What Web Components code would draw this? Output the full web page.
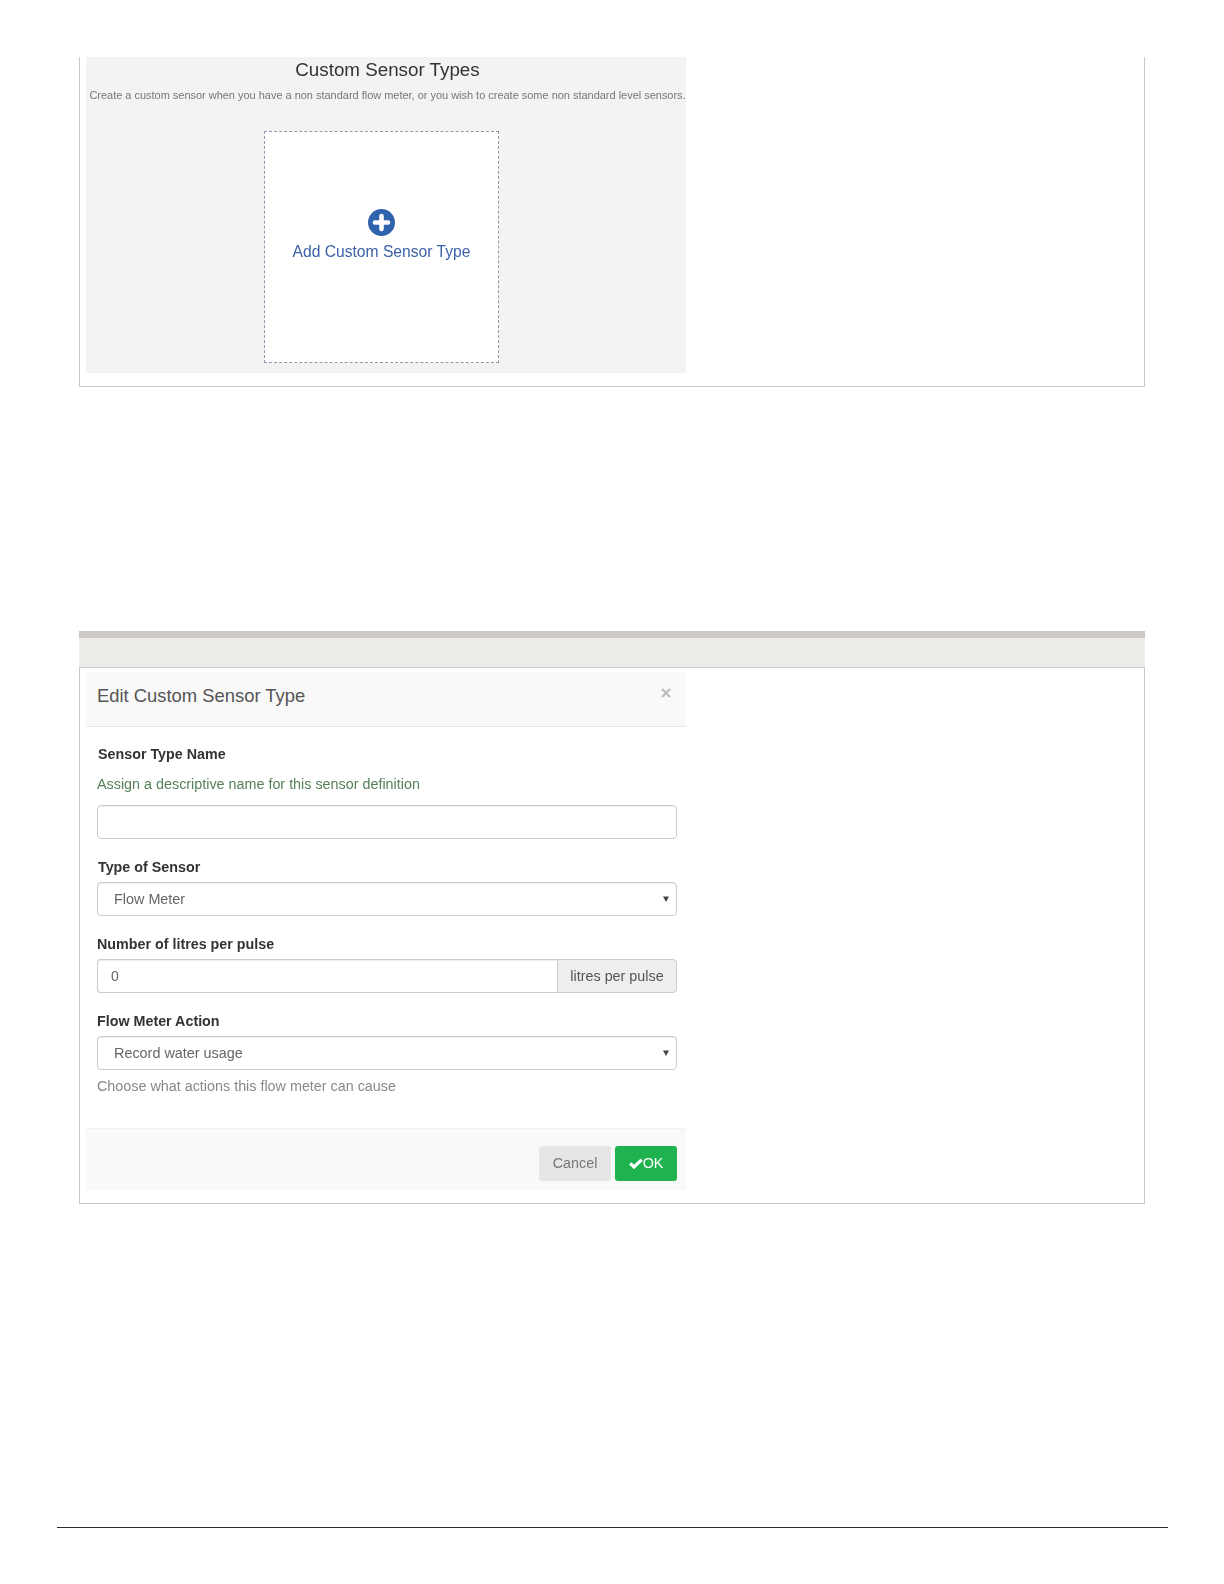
<!DOCTYPE html>
<html>
<head>
<meta charset="utf-8">
<style>
  html, body { margin: 0; background: #fff; }
  body {
    width: 1224px;
    height: 1584px;
    overflow: hidden;
    font-family: "Liberation Sans", Arial, sans-serif;
    color: #333;
  }
</style>
</head>
<body>
<doc-page>
  <shot-frame>
    <custom-types></custom-types>
  </shot-frame>
  <shot-frame heading>
    <edit-dialog></edit-dialog>
  </shot-frame>
</doc-page>

<script>
class DocPage extends HTMLElement {
  constructor() {
    super()
    this.attachShadow({ mode: 'open' }).innerHTML = /*html*/ `
<style>
  :host { display: block; height: 1584px; padding-top: 57px; box-sizing: border-box; position: relative; }
  .shots { display: flex; flex-flow: column; gap: 244px; margin: 0 79px; }
  hr { position: absolute; left: 57px; right: 56px; top: 1527px; margin: 0; border: 0; border-top: 1px solid #2b2b2b; }
</style>
<div class="shots"><slot></slot></div>
<hr>`
  }
}

class ShotFrame extends HTMLElement {
  constructor() {
    super()
    this.attachShadow({ mode: 'open' }).innerHTML = /*html*/ `
<style>
  :host { display: block; box-sizing: border-box; width: 1066px; border: 1px solid #c9c9c9; border-top: 0; }
  .bar { display: none; }
  :host([heading]) .bar {
    display: block;
    height: 29px;
    margin: 0 -1px;
    background: #eeece8;
    border-top: 7px solid #cdcac5;
    border-bottom: 1px solid #c9c9c9;
  }
  .inner { padding: 0 0 13px 6px; }
  :host([heading]) .inner { padding-top: 4px; padding-bottom: 13px; }
</style>
<div class="bar"></div>
<div class="inner"><slot></slot></div>`
  }
}

class CustomTypes extends HTMLElement {
  constructor() {
    super()
    this.attachShadow({ mode: 'open' }).innerHTML = /*html*/ `
<style>
  :host { display: block; box-sizing: border-box; width: 600px; height: 316px; padding-top: 3px; background: #f3f3f3; filter: blur(.35px); }
  h2 { margin: 0 0 0 3px; font-size: 18.800px; line-height: 20px; font-weight: 400; color: #333; text-align: center; }
  p {
    margin: 8px 0 0;
    padding-left: 3px;
    font-size: 11px;
    line-height: 14px;
    color: #777;
    text-align: center;
    white-space: nowrap;
    letter-spacing: -.02px;
  }
  .card {
    box-sizing: border-box;
    width: 235px;
    height: 232px;
    margin: 29px 0 0 178px;
    display: flex;
    flex-flow: column;
    align-items: center;
    padding-top: 77px;
    background: #fff;
    border: 1px dashed #8f99ad;
    color: #3b62a8;
    font-size: 15.650px;
    line-height: 20px;
  }
  svg { display: block; width: 27px; height: 27px; margin-bottom: 6px; }
</style>
<h2>Custom Sensor Types</h2>
<p>Create a custom sensor when you have a non standard flow meter, or you wish to create some non standard level sensors.</p>
<div class="card">
  <svg viewBox="0 0 27 27"><circle cx="13.5" cy="13.5" r="13.5" fill="#2f63ae"/><path d="M13.500 7v13M7 13.500h13" stroke="#fff" stroke-width="4.600" stroke-linecap="round" fill="none"/></svg>
  <span>Add Custom Sensor Type</span>
</div>`
  }
}

class FieldLabel extends HTMLElement {
  constructor() {
    super()
    this.attachShadow({ mode: 'open' }).innerHTML = /*html*/ `
<style>
  :host { display: block; font-size: 14.300px; line-height: 20px; font-weight: 700; color: #333; }
</style>
<slot></slot>`
  }
}

class SelectBox extends HTMLElement {
  constructor() {
    super()
    this.attachShadow({ mode: 'open' }).innerHTML = /*html*/ `
<style>
  :host {
    display: flex;
    align-items: center;
    justify-content: space-between;
    box-sizing: border-box;
    height: 34px;
    padding: 0 7px 0 16px;
    background: #fff;
    border: 1px solid #ccc;
    border-radius: 4px;
    box-shadow: inset 0 1px 1px rgba(0,0,0,.075);
    font-size: 14.400px;
    color: #666;
  }
  svg { width: 6px; height: 6px; display: block; }
</style>
<slot></slot>
<svg viewBox="0 0 6 6"><path d="M0 .5h6L3 6z" fill="#444"/></svg>`
  }
}

class EditDialog extends HTMLElement {
  constructor() {
    super()
    this.attachShadow({ mode: 'open' }).innerHTML = /*html*/ `
<style>
  :host { display: block; width: 600px; font-size: 14.350px; filter: blur(.35px); }
  header {
    position: relative;
    box-sizing: border-box;
    height: 55px;
    padding: 11px 12px 0 11px;
    background: #f9f9f9;
    border-bottom: 1px solid #e5e5e5;
    font-size: 18.400px;
    line-height: 26px;
    color: #555;
  }
  .close { position: absolute; right: 15px; top: 16px; width: 10px; height: 10px; }
  .body { padding: 17px 9px 0 11px; }
  .help { line-height: 20px; }
  .green { margin-top: 10px; color: #55805a; }
  .gray { margin-top: 6px; color: #888; }
  input {
    display: block;
    box-sizing: border-box;
    width: 100%;
    height: 34px;
    padding: 0 13px;
    border: 1px solid #ccc;
    border-radius: 4px;
    box-shadow: inset 0 1px 1px rgba(0,0,0,.075);
    font: 14px "Liberation Sans", Arial, sans-serif;
    color: #666;
    background: #fff;
  }
  .name { margin-top: 11px; }
  field-label { margin-top: 18px; }
  field-label.first { margin-top: 0; }
  .nudge { padding-left: 1px; }
  .tight { margin-top: 5px; }
  .group { display: flex; margin-top: 5px; }
  .group input { flex: 1; min-width: 0; border-right: 0; border-radius: 4px 0 0 4px; }
  .addon {
    box-sizing: border-box;
    width: 120px;
    height: 34px;
    line-height: 32px;
    text-align: center;
    background: #eee;
    border: 1px solid #ccc;
    border-radius: 0 4px 4px 0;
    color: #555;
  }
  footer {
    display: flex;
    justify-content: flex-end;
    gap: 4px;
    box-sizing: border-box;
    height: 62px;
    margin-top: 32px;
    padding: 17px 9px 0 0;
    background: #f9f9f9;
    border-top: 1px solid #f2f2f2;
  }
  .btn {
    box-sizing: border-box;
    height: 35px;
    line-height: 35px;
    text-align: center;
    border-radius: 3px;
  }
  .cancel { width: 72px; background: #e6e6e6; color: #777; }
  .ok {
    display: flex;
    justify-content: center;
    align-items: center;
    width: 62px;
    background: #1fb350;
    color: #fff;
  }
  .ok svg { width: 14px; height: 11px; display: block; margin-top: -1px; }
</style>
<header>
  Edit Custom Sensor Type
  <svg class="close" viewBox="0 0 10 10"><path d="M1 1l8 8M9 1l-8 8" stroke="#bdbdbd" stroke-width="2.400" fill="none"/></svg>
</header>
<div class="body">
  <field-label class="first nudge">Sensor Type Name</field-label>
  <div class="help green">Assign a descriptive name for this sensor definition</div>
  <input class="name" type="text">
  <field-label class="nudge">Type of Sensor</field-label>
  <select-box class="tight">Flow Meter</select-box>
  <field-label>Number of litres per pulse</field-label>
  <div class="group">
    <input type="text" value="0">
    <div class="addon">litres per pulse</div>
  </div>
  <field-label>Flow Meter Action</field-label>
  <select-box class="tight">Record water usage</select-box>
  <div class="help gray">Choose what actions this flow meter can cause</div>
</div>
<footer>
  <div class="btn cancel">Cancel</div>
  <div class="btn ok"><svg viewBox="0 0 14 11"><path d="M1.200 5.400l3.800 3.600L12.800 1.600" stroke="#fff" stroke-width="3.200" fill="none"/></svg>OK</div>
</footer>`
  }
}

customElements.define('doc-page', DocPage)
customElements.define('shot-frame', ShotFrame)
customElements.define('custom-types', CustomTypes)
customElements.define('field-label', FieldLabel)
customElements.define('select-box', SelectBox)
customElements.define('edit-dialog', EditDialog)
</script>
</body>
</html>
